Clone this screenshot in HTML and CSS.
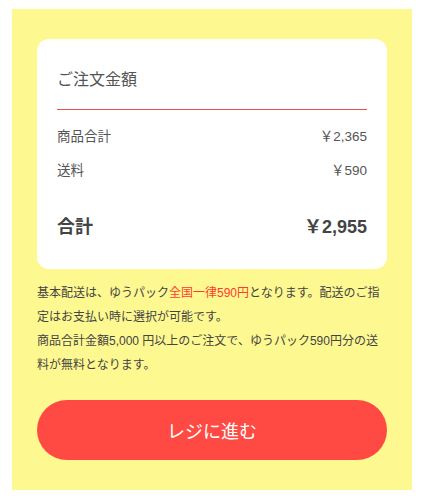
FILE: index.html
```html
<!DOCTYPE html>
<html lang="ja">
<head>
<meta charset="utf-8">
<link rel="stylesheet" href="styles.css">
</head>
<body>
<div class="page">
  <div class="panel">
    <div class="card">
      <div class="card-head">ご注文金額</div>
      <div class="row"><span>商品合計</span><span>￥2,365</span></div>
      <div class="row row-ship"><span>送料</span><span>￥590</span></div>
      <div class="row row-total"><span>合計</span><span>￥2,955</span></div>
    </div>
    <p class="note">基本配送は、ゆうパック<span class="hl">全国一律590円</span>となります。配送のご指定はお支払い時に選択が可能です。<br>商品合計金額5,000 円以上のご注文で、ゆうパック590円分の送料が無料となります。</p>
    <button class="checkout">レジに進む</button>
  </div>
</div>
</body>
</html>
```

FILE: styles.css
```css
html, body {
  margin: 0;
  padding: 0;
  background: #fff;
}
body {
  font-family: "Liberation Sans", "Noto Sans CJK JP", sans-serif;
  color: #444;
}
.page {
  padding: 9px 13px 10px 12px;
}
.panel {
  background: #fdf890;
  padding: 30px 25px 30px 25px;
}
.card {
  background: #fff;
  border-radius: 12px;
  padding: 29px 20px 30px 20px;
}
.card-head {
  font-size: 16px;
  line-height: 24px;
  color: #555;
  padding-bottom: 17px;
  border-bottom: 1px solid #e8504a;
}
.row {
  display: flex;
  justify-content: space-between;
  font-size: 13.5px;
  line-height: 20px;
  margin-top: 17px;
  color: #555;
}
.row-ship {
  margin-top: 14px;
}
.row-total {
  margin-top: 34px;
  font-size: 18px;
  line-height: 24px;
  font-weight: bold;
  color: #444;
}
.note {
  margin: 12px 0 0 0;
  font-size: 12px;
  line-height: 24px;
  color: #444;
}
.hl {
  color: #ff3b30;
}
.checkout {
  display: block;
  width: 100%;
  height: 60px;
  margin-top: 23px;
  border: none;
  border-radius: 30px;
  background: #ff4a44;
  color: #fff;
  font-family: "Liberation Sans", "Noto Sans CJK JP", sans-serif;
  font-size: 18px;
  padding: 0;
}
```
